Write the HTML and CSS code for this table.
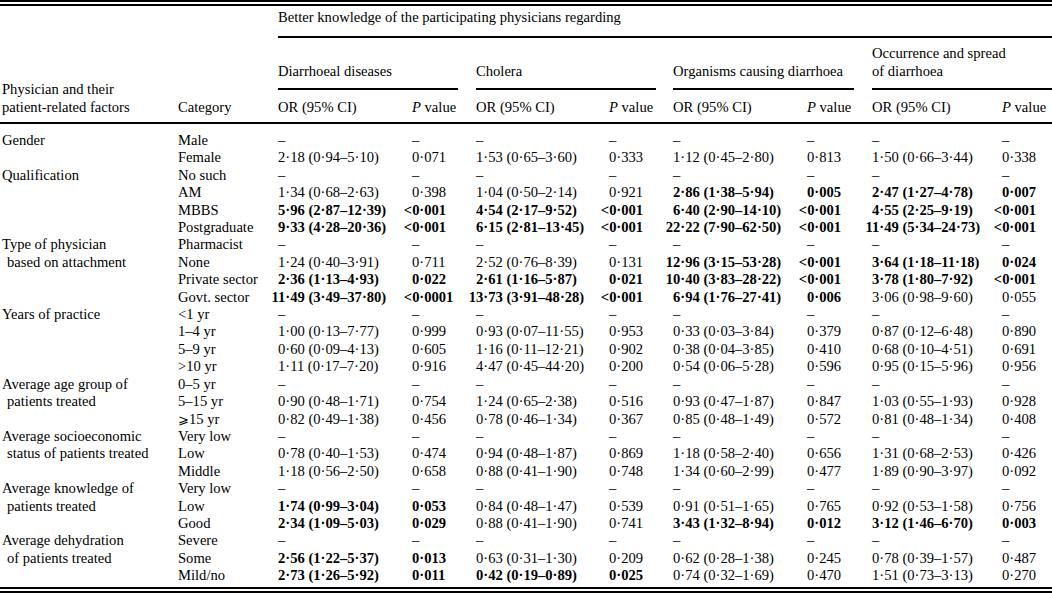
FILE: index.html
```html
<!DOCTYPE html>
<html lang="en">
<head>
<meta charset="utf-8">
<title>Table</title>
<link rel="stylesheet" href="styles.css">
</head>
<body>
<div class="wrap">
<table class="t">
<colgroup>
<col class="w-fac"><col class="w-cat">
<col class="w-or1"><col class="w-p1">
<col class="w-or2"><col class="w-p2">
<col class="w-or3"><col class="w-p3">
<col class="w-or4"><col class="w-p4">
</colgroup>
<thead>
<tr class="h1">
<th rowspan="3" class="fac hd">Physician and their<br>patient-related factors</th>
<th rowspan="3" class="cat hd">Category</th>
<th colspan="8" class="top">Better knowledge of the participating physicians regarding</th>
</tr>
<tr class="h2">
<th colspan="2" class="grp"><div class="grp-in">Diarrhoeal diseases</div></th>
<th colspan="2" class="grp g2"><div class="grp-in">Cholera</div></th>
<th colspan="2" class="grp"><div class="grp-in">Organisms causing diarrhoea</div></th>
<th colspan="2" class="grp last"><div class="grp-in">Occurrence and spread<br>of diarrhoea</div></th>
</tr>
<tr class="h3">
<th class="hd">OR (95% CI)</th><th class="hd"><i>P</i> value</th>
<th class="hd">OR (95% CI)</th><th class="hd"><i>P</i> value</th>
<th class="hd">OR (95% CI)</th><th class="hd"><i>P</i> value</th>
<th class="hd">OR (95% CI)</th><th class="hd"><i>P</i> value</th>
</tr>
</thead>
<tbody>
<tr class="first"><td class="fac">Gender</td><td>Male</td><td>–</td><td>–</td><td>–</td><td>–</td><td>–</td><td>–</td><td>–</td><td>–</td></tr>
<tr><td class="fac"></td><td>Female</td>
<td><span class="i">2</span>·18 (0·94–5·10)</td><td><span class="pi">0</span>·071</td>
<td><span class="i">1</span>·53 (0·65–3·60)</td><td><span class="pi">0</span>·333</td>
<td><span class="i">1</span>·12 (0·45–2·80)</td><td><span class="pi">0</span>·813</td>
<td><span class="i">1</span>·50 (0·66–3·44)</td><td><span class="pi">0</span>·338</td></tr>

<tr><td class="fac">Qualification</td><td>No such</td><td>–</td><td>–</td><td>–</td><td>–</td><td>–</td><td>–</td><td>–</td><td>–</td></tr>
<tr><td class="fac"></td><td>AM</td>
<td><span class="i">1</span>·34 (0·68–2·63)</td><td><span class="pi">0</span>·398</td>
<td><span class="i">1</span>·04 (0·50–2·14)</td><td><span class="pi">0</span>·921</td>
<td class="b"><span class="i">2</span>·86 (1·38–5·94)</td><td class="b"><span class="pi">0</span>·005</td>
<td class="b"><span class="i">2</span>·47 (1·27–4·78)</td><td class="b"><span class="pi">0</span>·007</td></tr>
<tr><td class="fac"></td><td>MBBS</td>
<td class="b"><span class="i">5</span>·96 (2·87–12·39)</td><td class="b"><span class="pi">&lt;0</span>·001</td>
<td class="b"><span class="i">4</span>·54 (2·17–9·52)</td><td class="b"><span class="pi">&lt;0</span>·001</td>
<td class="b"><span class="i">6</span>·40 (2·90–14·10)</td><td class="b"><span class="pi">&lt;0</span>·001</td>
<td class="b"><span class="i">4</span>·55 (2·25–9·19)</td><td class="b"><span class="pi">&lt;0</span>·001</td></tr>
<tr><td class="fac"></td><td>Postgraduate</td>
<td class="b"><span class="i">9</span>·33 (4·28–20·36)</td><td class="b"><span class="pi">&lt;0</span>·001</td>
<td class="b"><span class="i">6</span>·15 (2·81–13·45)</td><td class="b"><span class="pi">&lt;0</span>·001</td>
<td class="b"><span class="i">22</span>·22 (7·90–62·50)</td><td class="b"><span class="pi">&lt;0</span>·001</td>
<td class="b"><span class="i">11</span>·49 (5·34–24·73)</td><td class="b"><span class="pi">&lt;0</span>·001</td></tr>

<tr><td class="fac">Type of physician</td><td>Pharmacist</td><td>–</td><td>–</td><td>–</td><td>–</td><td>–</td><td>–</td><td>–</td><td>–</td></tr>
<tr><td class="fac ind">based on attachment</td><td>None</td>
<td><span class="i">1</span>·24 (0·40–3·91)</td><td><span class="pi">0</span>·711</td>
<td><span class="i">2</span>·52 (0·76–8·39)</td><td><span class="pi">0</span>·131</td>
<td class="b"><span class="i">12</span>·96 (3·15–53·28)</td><td class="b"><span class="pi">&lt;0</span>·001</td>
<td class="b"><span class="i">3</span>·64 (1·18–11·18)</td><td class="b"><span class="pi">0</span>·024</td></tr>
<tr><td class="fac"></td><td>Private sector</td>
<td class="b"><span class="i">2</span>·36 (1·13–4·93)</td><td class="b"><span class="pi">0</span>·022</td>
<td class="b"><span class="i">2</span>·61 (1·16–5·87)</td><td class="b"><span class="pi">0</span>·021</td>
<td class="b"><span class="i">10</span>·40 (3·83–28·22)</td><td class="b"><span class="pi">&lt;0</span>·001</td>
<td class="b"><span class="i">3</span>·78 (1·80–7·92)</td><td class="b"><span class="pi">&lt;0</span>·001</td></tr>
<tr><td class="fac"></td><td>Govt. sector</td>
<td class="b"><span class="i">11</span>·49 (3·49–37·80)</td><td class="b"><span class="pi">&lt;0</span>·0001</td>
<td class="b"><span class="i">13</span>·73 (3·91–48·28)</td><td class="b"><span class="pi">&lt;0</span>·001</td>
<td class="b"><span class="i">6</span>·94 (1·76–27·41)</td><td class="b"><span class="pi">0</span>·006</td>
<td><span class="i">3</span>·06 (0·98–9·60)</td><td><span class="pi">0</span>·055</td></tr>

<tr><td class="fac">Years of practice</td><td>&lt;1 yr</td><td>–</td><td>–</td><td>–</td><td>–</td><td>–</td><td>–</td><td>–</td><td>–</td></tr>
<tr><td class="fac"></td><td>1–4 yr</td>
<td><span class="i">1</span>·00 (0·13–7·77)</td><td><span class="pi">0</span>·999</td>
<td><span class="i">0</span>·93 (0·07–11·55)</td><td><span class="pi">0</span>·953</td>
<td><span class="i">0</span>·33 (0·03–3·84)</td><td><span class="pi">0</span>·379</td>
<td><span class="i">0</span>·87 (0·12–6·48)</td><td><span class="pi">0</span>·890</td></tr>
<tr><td class="fac"></td><td>5–9 yr</td>
<td><span class="i">0</span>·60 (0·09–4·13)</td><td><span class="pi">0</span>·605</td>
<td><span class="i">1</span>·16 (0·11–12·21)</td><td><span class="pi">0</span>·902</td>
<td><span class="i">0</span>·38 (0·04–3·85)</td><td><span class="pi">0</span>·410</td>
<td><span class="i">0</span>·68 (0·10–4·51)</td><td><span class="pi">0</span>·691</td></tr>
<tr><td class="fac"></td><td>&gt;10 yr</td>
<td><span class="i">1</span>·11 (0·17–7·20)</td><td><span class="pi">0</span>·916</td>
<td><span class="i">4</span>·47 (0·45–44·20)</td><td><span class="pi">0</span>·200</td>
<td><span class="i">0</span>·54 (0·06–5·28)</td><td><span class="pi">0</span>·596</td>
<td><span class="i">0</span>·95 (0·15–5·96)</td><td><span class="pi">0</span>·956</td></tr>

<tr><td class="fac">Average age group of</td><td>0–5 yr</td><td>–</td><td>–</td><td>–</td><td>–</td><td>–</td><td>–</td><td>–</td><td>–</td></tr>
<tr><td class="fac ind">patients treated</td><td>5–15 yr</td>
<td><span class="i">0</span>·90 (0·48–1·71)</td><td><span class="pi">0</span>·754</td>
<td><span class="i">1</span>·24 (0·65–2·38)</td><td><span class="pi">0</span>·516</td>
<td><span class="i">0</span>·93 (0·47–1·87)</td><td><span class="pi">0</span>·847</td>
<td><span class="i">1</span>·03 (0·55–1·93)</td><td><span class="pi">0</span>·928</td></tr>
<tr><td class="fac"></td><td><span class="ge">⩾</span>15 yr</td>
<td><span class="i">0</span>·82 (0·49–1·38)</td><td><span class="pi">0</span>·456</td>
<td><span class="i">0</span>·78 (0·46–1·34)</td><td><span class="pi">0</span>·367</td>
<td><span class="i">0</span>·85 (0·48–1·49)</td><td><span class="pi">0</span>·572</td>
<td><span class="i">0</span>·81 (0·48–1·34)</td><td><span class="pi">0</span>·408</td></tr>

<tr><td class="fac">Average socioeconomic</td><td>Very low</td><td>–</td><td>–</td><td>–</td><td>–</td><td>–</td><td>–</td><td>–</td><td>–</td></tr>
<tr><td class="fac ind">status of patients treated</td><td>Low</td>
<td><span class="i">0</span>·78 (0·40–1·53)</td><td><span class="pi">0</span>·474</td>
<td><span class="i">0</span>·94 (0·48–1·87)</td><td><span class="pi">0</span>·869</td>
<td><span class="i">1</span>·18 (0·58–2·40)</td><td><span class="pi">0</span>·656</td>
<td><span class="i">1</span>·31 (0·68–2·53)</td><td><span class="pi">0</span>·426</td></tr>
<tr><td class="fac"></td><td>Middle</td>
<td><span class="i">1</span>·18 (0·56–2·50)</td><td><span class="pi">0</span>·658</td>
<td><span class="i">0</span>·88 (0·41–1·90)</td><td><span class="pi">0</span>·748</td>
<td><span class="i">1</span>·34 (0·60–2·99)</td><td><span class="pi">0</span>·477</td>
<td><span class="i">1</span>·89 (0·90–3·97)</td><td><span class="pi">0</span>·092</td></tr>

<tr><td class="fac">Average knowledge of</td><td>Very low</td><td>–</td><td>–</td><td>–</td><td>–</td><td>–</td><td>–</td><td>–</td><td>–</td></tr>
<tr><td class="fac ind">patients treated</td><td>Low</td>
<td class="b"><span class="i">1</span>·74 (0·99–3·04)</td><td class="b"><span class="pi">0</span>·053</td>
<td><span class="i">0</span>·84 (0·48–1·47)</td><td><span class="pi">0</span>·539</td>
<td><span class="i">0</span>·91 (0·51–1·65)</td><td><span class="pi">0</span>·765</td>
<td><span class="i">0</span>·92 (0·53–1·58)</td><td><span class="pi">0</span>·756</td></tr>
<tr><td class="fac"></td><td>Good</td>
<td class="b"><span class="i">2</span>·34 (1·09–5·03)</td><td class="b"><span class="pi">0</span>·029</td>
<td><span class="i">0</span>·88 (0·41–1·90)</td><td><span class="pi">0</span>·741</td>
<td class="b"><span class="i">3</span>·43 (1·32–8·94)</td><td class="b"><span class="pi">0</span>·012</td>
<td class="b"><span class="i">3</span>·12 (1·46–6·70)</td><td class="b"><span class="pi">0</span>·003</td></tr>

<tr><td class="fac">Average dehydration</td><td>Severe</td><td>–</td><td>–</td><td>–</td><td>–</td><td>–</td><td>–</td><td>–</td><td>–</td></tr>
<tr><td class="fac ind">of patients treated</td><td>Some</td>
<td class="b"><span class="i">2</span>·56 (1·22–5·37)</td><td class="b"><span class="pi">0</span>·013</td>
<td><span class="i">0</span>·63 (0·31–1·30)</td><td><span class="pi">0</span>·209</td>
<td><span class="i">0</span>·62 (0·28–1·38)</td><td><span class="pi">0</span>·245</td>
<td><span class="i">0</span>·78 (0·39–1·57)</td><td><span class="pi">0</span>·487</td></tr>
<tr class="last-row"><td class="fac"></td><td>Mild/no</td>
<td class="b"><span class="i">2</span>·73 (1·26–5·92)</td><td class="b"><span class="pi">0</span>·011</td>
<td class="b"><span class="i">0</span>·42 (0·19–0·89)</td><td class="b"><span class="pi">0</span>·025</td>
<td><span class="i">0</span>·74 (0·32–1·69)</td><td><span class="pi">0</span>·470</td>
<td><span class="i">1</span>·51 (0·73–3·13)</td><td><span class="pi">0</span>·270</td></tr>
</tbody>
</table>
</div>
</body>
</html>
```

FILE: styles.css
```css
html, body {
  margin: 0;
  padding: 0;
  background: #fff;
}
body {
  font-family: "Liberation Serif", "Times New Roman", "DejaVu Serif", serif;
  font-size: 14.6px;
  letter-spacing: 0;
  color: #000;
}
.wrap {
  width: 1052px;
  border-top: 6px double #000;
  border-bottom: 6px double #000;
}
.t {
  width: 1052px;
  table-layout: fixed;
  border-collapse: collapse;
  border-spacing: 0;
}
.w-fac { width: 178px; }
.w-cat { width: 100px; }
.w-or1 { width: 134px; }
.w-p1 { width: 64px; }
.w-or2 { width: 133px; }
.w-p2 { width: 64px; }
.w-or3 { width: 134px; }
.w-p3 { width: 65px; }
.w-or4 { width: 130px; }
.w-p4 { width: 50px; }

th, td {
  padding: 0;
  font-weight: normal;
  text-align: left;
  white-space: nowrap;
  overflow: visible;
}
th {
  line-height: 18px;
  vertical-align: bottom;
}
.fac { padding-left: 2px; }
.fac.ind { padding-left: 7px; }

.h1 .top {
  padding: 2px 0 10px 0;
  border-bottom: 2px solid #000;
  vertical-align: middle;
}
.h1 .hd {
  padding-bottom: 6px;
  border-bottom: 2px solid #000;
}
.grp {
  padding: 6px 18px 0 0;
}
.grp.g2 { padding-right: 17px; }
.grp.last { padding-right: 0; }
.grp-in {
  padding-bottom: 8px;
  border-bottom: 2px solid #000;
}
.h3 .hd {
  padding-top: 8px;
  padding-bottom: 6px;
  border-bottom: 2px solid #000;
}

td {
  line-height: 17.4px;
  height: 17.4px;
  vertical-align: middle;
}
tr.first td { padding-top: 8px; }
tr.last-row td { padding-bottom: 2px; }
td.b { font-weight: bold; }

.i {
  display: inline-block;
  width: 14.6px;
  margin-left: -7.3px;
  text-align: right;
}
.pi {
  display: inline-block;
  width: 15.5px;
  margin-left: -8.2px;
  text-align: right;
}
.ge {
  font-family: "DejaVu Serif", serif;
  font-size: 13px;
}
```
